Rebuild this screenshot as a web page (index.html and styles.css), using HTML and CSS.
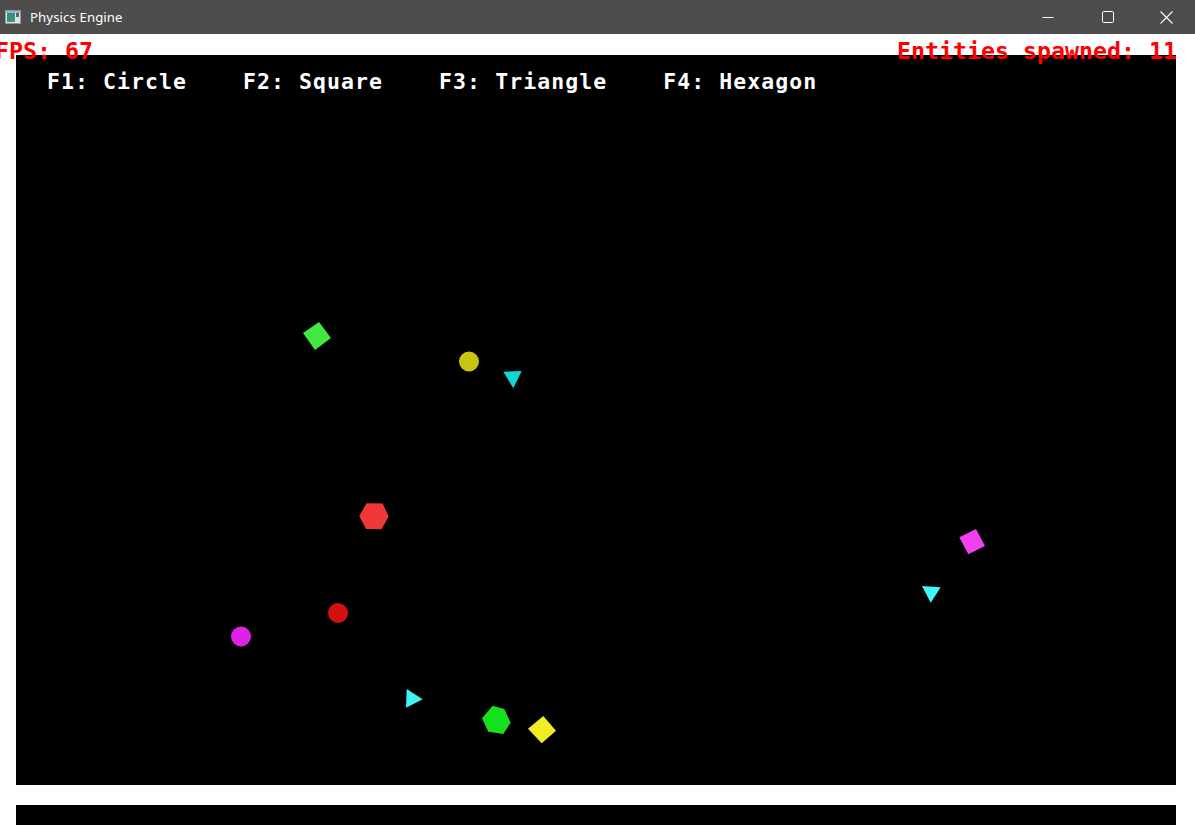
FILE: index.html
```html
<!DOCTYPE html>
<html>
<head>
<meta charset="utf-8">
<title>Physics Engine</title>
<link rel="stylesheet" href="styles.css">
</head>
<body>
<div class="window">
  <header class="titlebar">
    <div class="title">
      <svg class="app-icon" width="16" height="14" viewBox="0 0 16 14">
        <rect x="0.5" y="0.5" width="15" height="13" fill="#dfe6ea" stroke="#8a9aa4"/>
        <rect x="1" y="1" width="14" height="2" fill="#9fb2bf"/>
        <defs>
          <linearGradient id="g" x1="0" y1="0" x2="1" y2="1">
            <stop offset="0" stop-color="#2f7f9f"/>
            <stop offset="1" stop-color="#47a06a"/>
          </linearGradient>
        </defs>
        <rect x="2" y="3" width="8" height="9" fill="url(#g)"/>
        <rect x="11" y="3" width="3" height="4" fill="#4d6a7a"/>
      </svg>
      <span class="title-text">Physics Engine</span>
    </div>
    <div class="controls">
      <div class="ctl">
        <svg width="12" height="12" viewBox="0 0 12 12"><line x1="0.5" y1="6.5" x2="11.5" y2="6.5" stroke="#fff" stroke-width="1"/></svg>
      </div>
      <div class="ctl">
        <svg width="12" height="12" viewBox="0 0 12 12"><rect x="0.5" y="0.5" width="11" height="11" rx="1.2" fill="none" stroke="#fff" stroke-width="1"/></svg>
      </div>
      <div class="ctl">
        <svg width="13" height="13" viewBox="0 0 13 13"><path d="M0.5 0.5 L12.5 12.5 M12.5 0.5 L0.5 12.5" stroke="#fff" stroke-width="1.1"/></svg>
      </div>
    </div>
  </header>
  <main class="client">
    <section class="stage">
      <svg class="world" viewBox="16 55 1160 730" width="1160" height="730">
        <polygon points="319,322 331,338 315,350 303,333" fill="#40e840"/>
        <circle cx="469" cy="361.5" r="10" fill="#c9c40e"/>
        <polygon points="503.3,371.7 521.7,371 513.3,388.3" fill="#10d6d6"/>
        <polygon points="366.5,503.3 382.7,503.5 388.7,516.5 381.5,529.3 366,529 359.3,516" fill="#f03838"/>
        <circle cx="338" cy="613" r="10" fill="#d41010"/>
        <circle cx="241" cy="636.5" r="10" fill="#e022e6"/>
        <polygon points="406.7,689 422.7,699.3 406,707.7" fill="#40f4f4"/>
        <polygon points="492.7,705.7 504.3,709 510.7,722.7 503.3,734 488.3,731.7 482,718.3" fill="#14e01e"/>
        <polygon points="543.3,716 556,730.7 541.7,743.3 528,728.7" fill="#f2ec22"/>
        <polygon points="976,529 985,546 968.3,554.3 959.3,537.3" fill="#f040f0"/>
        <polygon points="922,586 940.7,587.3 930.7,602.7" fill="#40f6f6"/>
      </svg>
      <div class="keys">F1: Circle    F2: Square    F3: Triangle    F4: Hexagon</div>
    </section>
    <div class="strip"></div>
    <div class="hud">
      <span class="hud-text">FPS: 67</span>
      <span class="hud-text">Entities spawned: 11</span>
    </div>
  </main>
</div>
</body>
</html>
```
FILE: styles.css
```css
* { box-sizing: border-box; }
html, body {
  margin: 0;
  padding: 0;
  width: 1195px;
  height: 825px;
  overflow: hidden;
  background: #ffffff;
}
.window {
  display: flex;
  flex-direction: column;
  width: 1195px;
  height: 825px;
}
.titlebar {
  height: 34px;
  flex: none;
  background: #4e4d4b;
  display: flex;
  align-items: center;
  justify-content: space-between;
}
.title {
  display: flex;
  align-items: center;
  padding-left: 5px;
  gap: 9px;
  margin-top: -1px;
}
.app-icon { display: block; }
.title-text {
  font-family: "Segoe UI", "Noto Sans", "Open Sans", sans-serif;
  font-size: 13.2px;
  color: #ffffff;
  letter-spacing: 0.1px;
}
.controls {
  display: flex;
  height: 34px;
}
.ctl {
  width: 58px;
  height: 34px;
  display: flex;
  align-items: center;
  justify-content: center;
}
.ctl:nth-child(1) { padding-right: 5px; }
.ctl svg { display: block; }
.client {
  position: relative;
  flex: 1;
  padding: 21px 19px 0 16px;
  display: flex;
  flex-direction: column;
  gap: 20px;
}
.stage {
  position: relative;
  width: 1160px;
  height: 730px;
  background: #000000;
  flex: none;
}
.world {
  position: absolute;
  left: 0;
  top: 0;
  display: block;
}
.keys {
  position: relative;
  padding: 15px 0 0 31px;
  font-family: "DejaVu Sans Mono", "Liberation Mono", monospace;
  font-weight: bold;
  font-size: 21.5px;
  letter-spacing: 1.06px;
  line-height: 24px;
  color: #ffffff;
  white-space: pre;
}
.strip {
  width: 1160px;
  height: 20px;
  background: #000000;
  flex: none;
}
.hud {
  position: absolute;
  left: -5px;
  top: 5px;
  width: 1182px;
  display: flex;
  justify-content: space-between;
}
.hud-text {
  font-family: "DejaVu Sans Mono", "Liberation Mono", monospace;
  font-weight: bold;
  font-size: 23.25px;
  line-height: 24px;
  color: #ff0000;
  white-space: pre;
}
```
